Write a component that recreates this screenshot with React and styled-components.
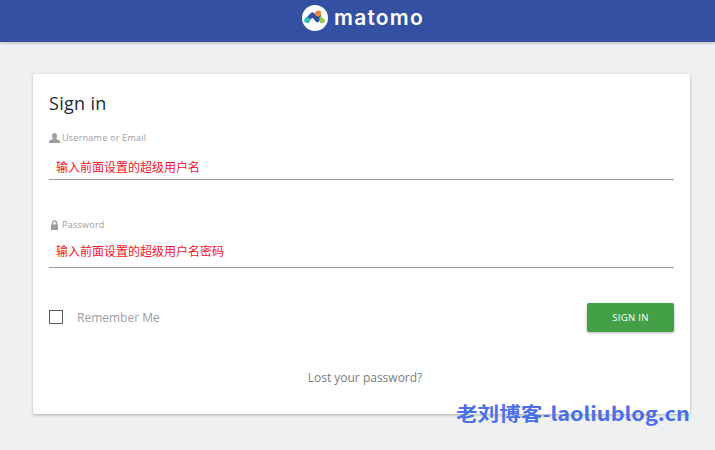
import React from 'react';
import styled, { createGlobalStyle } from 'styled-components';

const Global = createGlobalStyle`
  html, body { margin: 0; padding: 0; background: #eef0f2; height: 100%; }
  body { font-family: "Open Sans", "Noto Sans CJK SC", sans-serif; overflow: hidden; }
`;
const Page = styled.div`
  width: 715px; height: 450px; position: relative; overflow: hidden;
  display: flex; flex-direction: column;
`;
const Header = styled.header`
  height: 42px; flex: none; background: #3450a3;
  box-shadow: 0 1px 3px rgba(0,0,0,.25);
  display: flex; justify-content: center; align-items: flex-start; padding-top: 5px; box-sizing: border-box;
`;
const LogoWrap = styled.div`display: flex; align-items: center; gap: 6px; margin-left: 11px; height: 26px;`;
const Wordmark = styled.span`
  font-family: "Inter", "Open Sans", sans-serif; font-size: 21px; line-height: 26px; font-weight: 600;
  letter-spacing: 1.2px; color: #fff;
`;
const Main = styled.main`padding: 32px 25px 0 33px; flex: 1;`;
const Card = styled.section`
  background: #fff; height: 340px; box-sizing: border-box; padding: 17px 16px 0;
  box-shadow: 0 1px 3px rgba(0,0,0,.28); border-radius: 2px;
  display: flex; flex-direction: column;
`;
const Title = styled.h2`
  margin: 0; font-size: 18px; line-height: 24px; font-weight: 400; color: #1f2a3a; letter-spacing: .3px;
`;
const Field = styled.div`
  margin-top: ${p => p.$top}px; display: flex; flex-direction: column;
`;
const Label = styled.label`
  display: flex; align-items: center; gap: 2px; font-size: 9px; line-height: 12px; color: #9a9da3; letter-spacing: .25px;
`;
const Value = styled.div`
  margin-top: ${p => p.$top}px; height: ${p => p.$h}px; box-sizing: border-box; border-bottom: 1px solid #9e9e9e;
  padding-left: 7px; color: #f5141f; font-size: 12px; line-height: 17px;
  font-family: "Noto Sans CJK SC", sans-serif;
`;
const Actions = styled.div`
  margin-top: 35px; display: flex; align-items: center; justify-content: space-between;
`;
const Remember = styled.label`
  display: flex; align-items: center; gap: 14px; font-size: 12px; color: #9b9ea4;
`;
const Box = styled.span`
  width: 14px; height: 14px; box-sizing: border-box; border: 1px solid #5a5a5a; display: block; margin-top: -2px;
`;
const Button = styled.button`
  width: 87px; height: 29px; border: 0; border-radius: 2px; background: #43a047; color: #fff;
  font-family: inherit; font-size: 9.5px; font-weight: 400; letter-spacing: .3px;
  box-shadow: 0 1px 3px rgba(0,0,0,.3); padding: 0;
`;
const Lost = styled.div`
  margin-top: 38px; margin-left: 7px; text-align: center; font-size: 12px; line-height: 16px; color: #7a7c80;
`;
const Watermark = styled.div`
  position: absolute; left: 456px; top: 399px; white-space: nowrap;
  font-family: "Noto Sans CJK SC", sans-serif; font-weight: 700; font-size: 19px; line-height: 27px; color: #4a70e8;
  transform: scaleX(1.137); transform-origin: left center;
`;

const Logo = () => (
  <svg width="26" height="26" viewBox="0 0 26 26">
    <circle cx="13" cy="13" r="13" fill="#fff" />
    <path d="M5 15 L10.5 9.5 L15.5 15 L17 11" fill="none" stroke="#3450a3" strokeWidth="4.4" strokeLinecap="round" strokeLinejoin="round" />
    <circle cx="5.2" cy="15.2" r="2.9" fill="#35bfc0" />
    <circle cx="16.2" cy="8.6" r="3" fill="#f38334" />
    <path d="M18.6 10.8 L23 15 A2.9 2.9 0 0 1 17.6 16.8 L17.2 13.5 Z" fill="#95c748" />
  </svg>
);
const UserIcon = () => (
  <svg width="11" height="10" viewBox="0 0 11 10" fill="#9e9c9c">
    <ellipse cx="5.5" cy="3" rx="2.5" ry="3" />
    <path d="M0 10 V8.8 C0 7.2 3 7 4 5.6 H7 C8 7 11 7.2 11 8.8 V10 Z" />
  </svg>
);
const LockIcon = () => (
  <svg width="11" height="10" viewBox="0 0 11 10">
    <path d="M3.5 5 V3 a2 2 0 0 1 4 0 V5" fill="none" stroke="#9e9c9c" strokeWidth="1.3" />
    <rect x="2" y="4.5" width="7" height="5.5" rx=".6" fill="#9e9c9c" />
  </svg>
);

export default function App() {
  return (
    <Page>
      <Global />
      <Header>
        <LogoWrap><Logo /><Wordmark>matomo</Wordmark></LogoWrap>
      </Header>
      <Main>
        <Card>
          <Title>Sign in</Title>
          <Field $top={17}>
            <Label><UserIcon />Username or Email</Label>
            <Value $top={14} $h={22}>输入前面设置的超级用户名</Value>
          </Field>
          <Field $top={39}>
            <Label><LockIcon />Password</Label>
            <Value $top={11} $h={26}>输入前面设置的超级用户名密码</Value>
          </Field>
          <Actions>
            <Remember><Box />Remember Me</Remember>
            <Button>SIGN IN</Button>
          </Actions>
          <Lost>Lost your password?</Lost>
        </Card>
      </Main>
      <Watermark>老刘博客-laoliublog.cn</Watermark>
    </Page>
  );
}
